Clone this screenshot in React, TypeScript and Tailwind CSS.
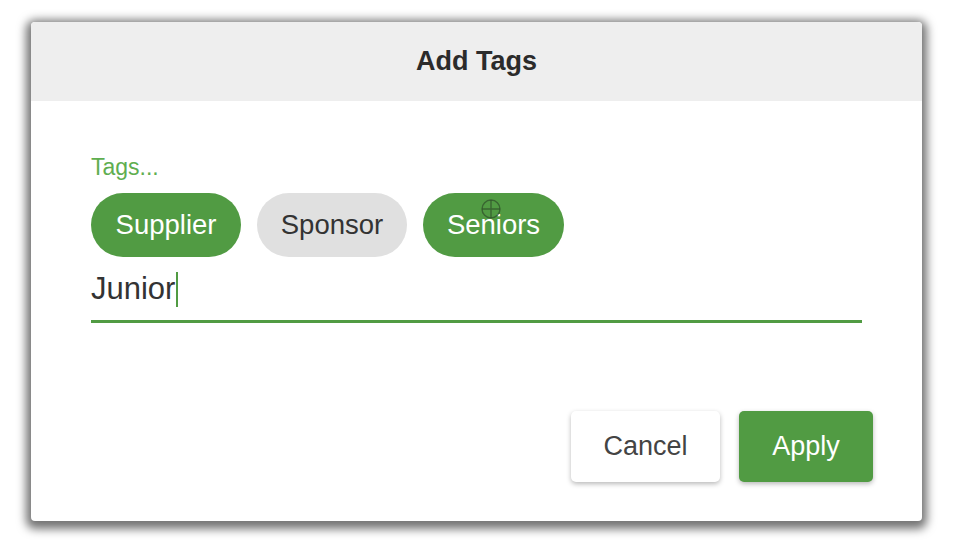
import React from 'react';

const font = { fontFamily: '"Liberation Sans", Arial, sans-serif' };

const Chip = ({ label, width, active, children }: { label: string; width: string; active?: boolean; children?: React.ReactNode }) => (
  <div
    className={`relative flex h-[64px] items-center justify-center rounded-full text-[27.5px] ${width} ${
      active ? 'bg-[#519b43] text-white' : 'bg-[#e0e0e0] text-[#333333]'
    }`}
  >
    {label}
    {children}
  </div>
);

const App = () => {
  return (
    <div className="h-[546px] w-[954px] bg-white pt-[22px] pl-[31px]" style={font}>
      <div className="flex h-[499px] w-[891px] flex-col overflow-hidden rounded-[4px] bg-white shadow-[0_3px_10px_5px_rgba(0,0,0,0.55)]">
        <div className="flex h-[79px] items-center justify-center bg-[#eeeeee]">
          <h1 className="text-[27px] font-bold text-[#2b2b2b]">Add Tags</h1>
        </div>

        <div className="flex flex-1 flex-col pt-[53px] pl-[60px] pr-[60px]">
          <div className="text-[23px] leading-[26px] text-[#5fae50]">Tags...</div>

          <div className="mt-[13px] flex gap-[16px]">
            <Chip label="Supplier" width="w-[150px]" active />
            <Chip label="Sponsor" width="w-[150px]" />
            <Chip label="Seniors" width="w-[141px]" active>
              {/* crosshair cursor */}
              <svg className="absolute left-[57px] top-[5px]" width="22" height="22" viewBox="0 0 22 22">
                <circle cx="11" cy="11" r="9" fill="none" stroke="#2f4f2a" strokeOpacity="0.7" strokeWidth="1.4" />
                <path d="M11 2v18M2 11h18" stroke="#2f4f2a" strokeOpacity="0.7" strokeWidth="1.4" />
              </svg>
            </Chip>
          </div>

          <div className="mt-[12px] w-[771px] border-b-[3px] border-[#519b43] pb-[11px]">
            <div className="flex items-center text-[31px] leading-[40px] text-[#333333]">
              Junior
              <span className="ml-[1px] inline-block h-[35px] w-[2px] bg-[#519b43]" />
            </div>
          </div>

          <div className="mt-auto mb-[39px] mr-[-11px] flex justify-end gap-[19px]">
            <button className="h-[71px] w-[149px] rounded-[5px] bg-white text-[27px] text-[#444444] shadow-[0_2px_5px_rgba(0,0,0,0.28)]">
              Cancel
            </button>
            <button className="h-[71px] w-[134px] rounded-[5px] bg-[#519b43] text-[27px] text-white shadow-[0_2px_5px_rgba(0,0,0,0.28)]">
              Apply
            </button>
          </div>
        </div>
      </div>
    </div>
  );
};

export default App;
